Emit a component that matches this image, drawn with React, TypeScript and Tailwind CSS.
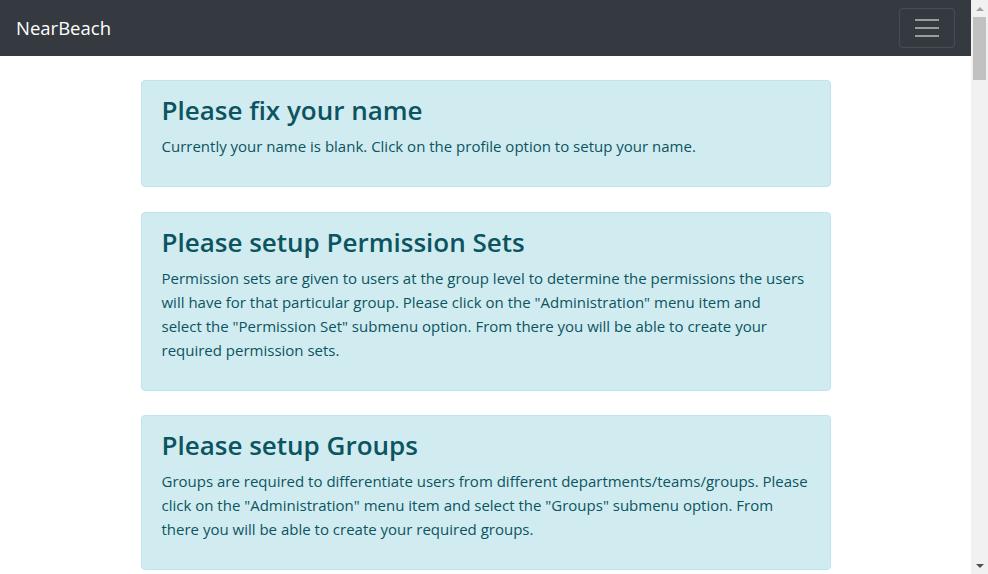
const alerts = [
  {
    title: 'Please fix your name',
    body: ['Currently your name is blank. Click on the profile option to setup your name.'],
  },
  {
    title: 'Please setup Permission Sets',
    body: [
      'Permission sets are given to users at the group level to determine the permissions the users',
      'will have for that particular group. Please click on the "Administration" menu item and',
      'select the "Permission Set" submenu option. From there you will be able to create your',
      'required permission sets.',
    ],
  },
  {
    title: 'Please setup Groups',
    body: [
      'Groups are required to differentiate users from different departments/teams/groups. Please',
      'click on the "Administration" menu item and select the "Groups" submenu option. From',
      'there you will be able to create your required groups.',
    ],
  },
];

function Alert({ title, body }: { title: string; body: string[] }) {
  return (
    <div className="mb-[24.5px] rounded border border-[#bee5eb] bg-[#d1ecf1] px-5 pb-[12px] pt-[12px] text-[#0c5460]">
      <h2 className="mb-[7px] text-[26px] font-semibold leading-[34px]">{title}</h2>
      <p className="mb-4 text-[15px] leading-6">
        {body.map((line, i) => (
          <span key={i} className="block whitespace-nowrap">
            {line}
          </span>
        ))}
      </p>
    </div>
  );
}

function Scrollbar() {
  return (
    <div className="fixed right-0 top-0 flex h-screen w-[17px] flex-col items-center bg-[#f1f1f1]">
      <div className="flex h-[17px] w-full items-center justify-center">
        <span className="h-0 w-0 border-x-[4px] border-b-[4px] border-x-transparent border-b-[#a3a3a3]" />
      </div>
      <div className="h-[63px] w-[13px] bg-[#c1c1c1]" />
      <div className="flex-1" />
      <div className="flex h-[17px] w-full items-center justify-center">
        <span className="h-0 w-0 border-x-[4px] border-t-[4px] border-x-transparent border-t-[#505050]" />
      </div>
    </div>
  );
}

export default function App() {
  return (
    <div className="min-h-[4900px] bg-white pr-[17px]" style={{ fontFamily: '"Open Sans", "Noto Sans", sans-serif' }}>
      <nav className="flex h-14 items-center justify-between bg-[#343a40] px-4">
        <span className="text-[18.5px] text-white">NearBeach</span>
        <button className="flex h-10 w-14 flex-col items-center justify-center gap-[6px] rounded border border-white/10">
          <span className="h-[2px] w-6 bg-white/50" />
          <span className="h-[2px] w-6 bg-white/50" />
          <span className="h-[2px] w-6 bg-white/50" />
        </button>
      </nav>
      <div className="mx-auto mt-6 w-[690px]">
        {alerts.map((a) => (
          <Alert key={a.title} title={a.title} body={a.body} />
        ))}
      </div>
      <Scrollbar />
    </div>
  );
}
